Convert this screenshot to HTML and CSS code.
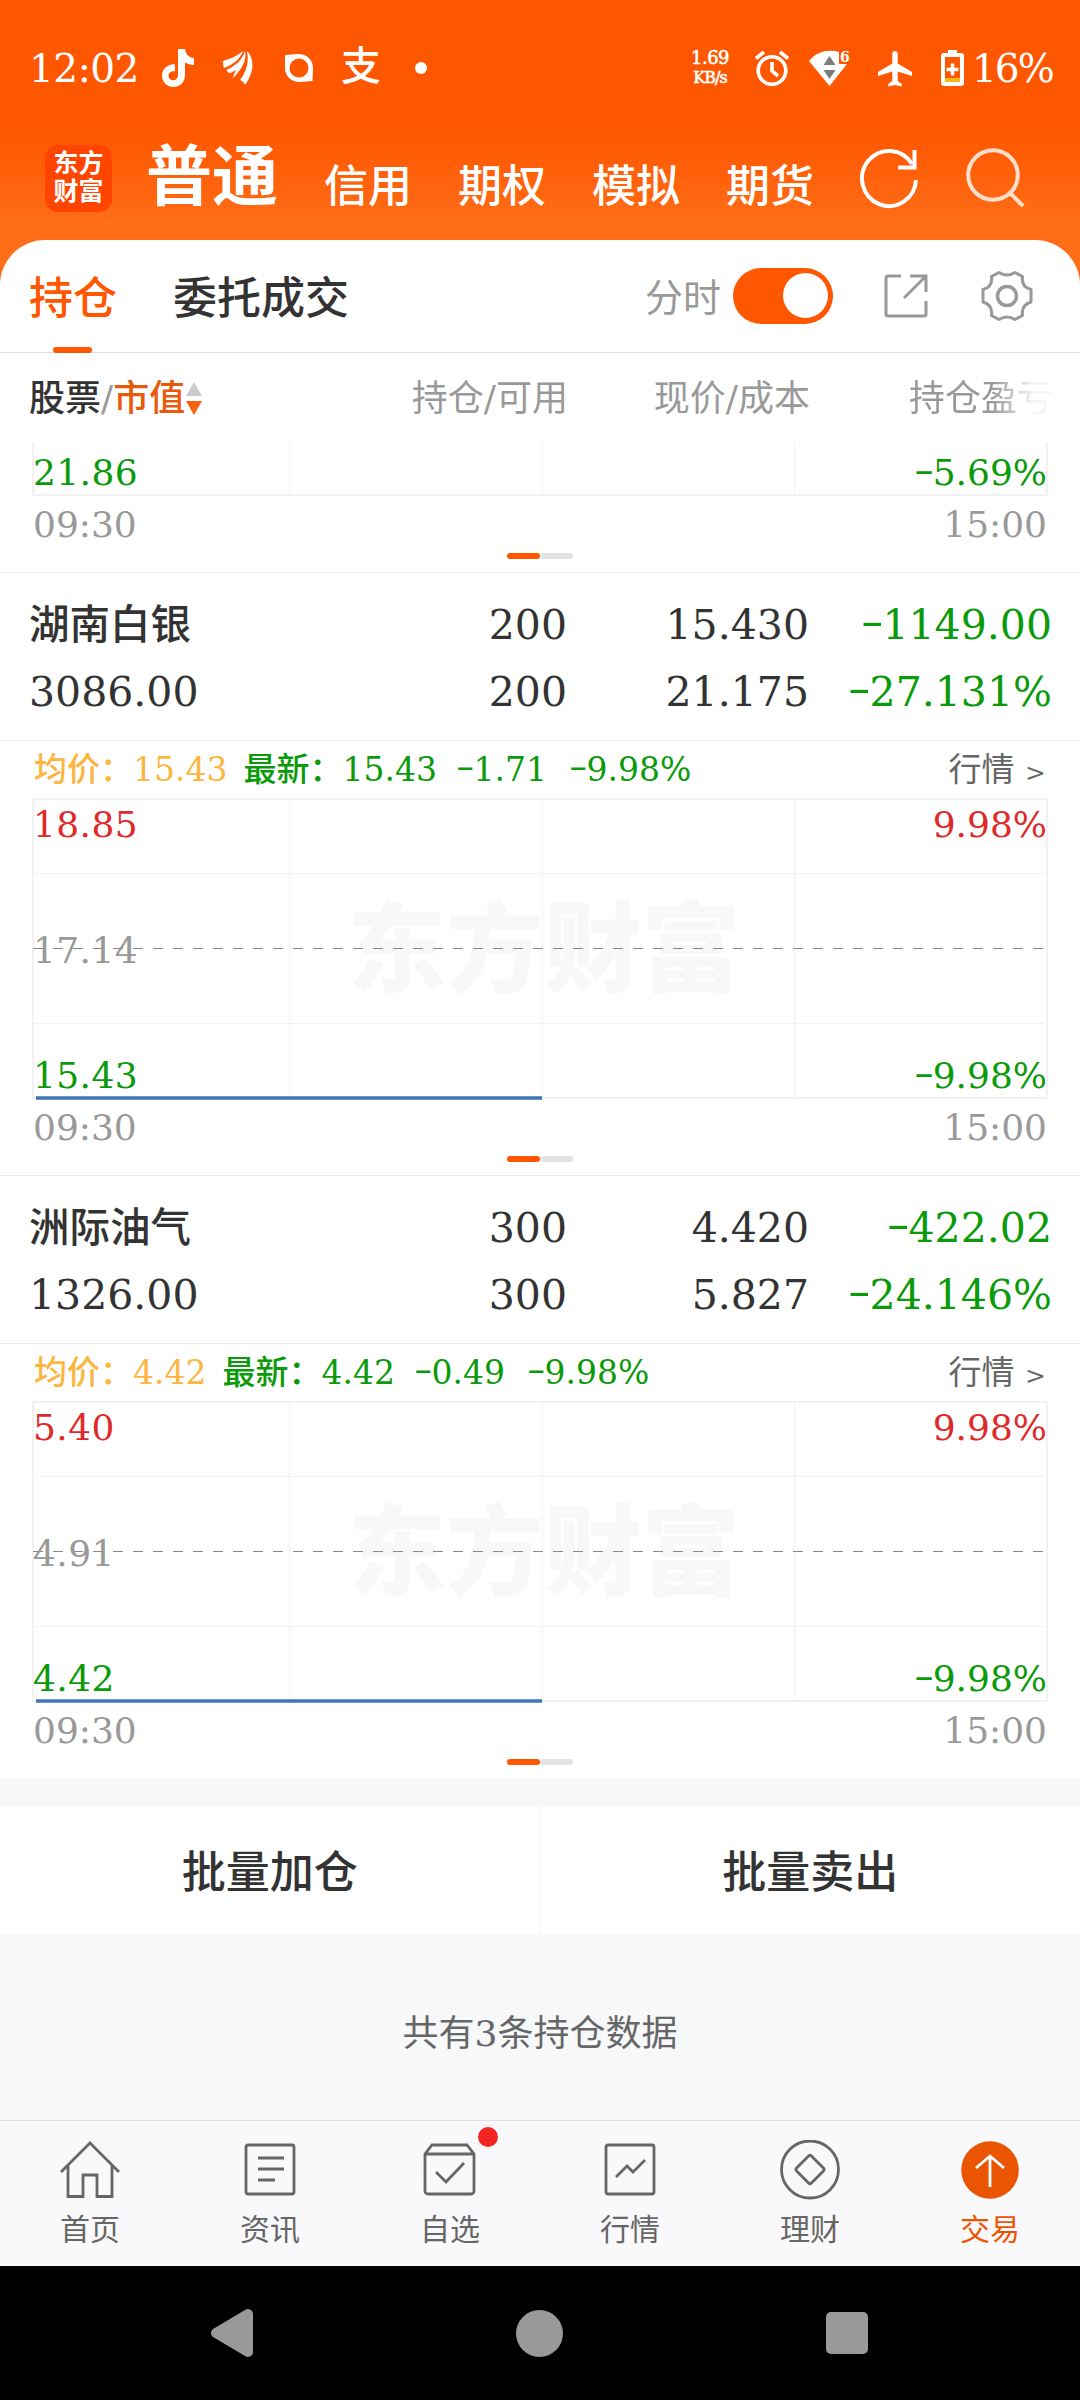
FILE: index.html
```html
<!DOCTYPE html>
<html lang="zh-CN">
<head>
    <meta charset="UTF-8">
    <title>持仓</title>
    <link rel="stylesheet" href="styles.css">
</head>
<body>
<!-- shared chart grid -->
<svg class="defs" width="0" height="0">
    <symbol id="chart-grid" viewBox="0 0 1016 301">
        <rect x="1" y="1" width="1014" height="299" fill="none" stroke="#f1f1f1" stroke-width="2"/>
        <path d="M257.5 2V299M510.5 2V299M762.5 2V299M2 75.5H1014M2 225.5H1014" stroke="#e6e6e6" stroke-width="1" stroke-dasharray="1 1"/>
    </symbol>
</svg>

<div class="header">
    <div class="status-bar">
        <span class="clock">12:02</span>
        <svg class="st-tiktok" width="34" height="40" viewBox="0 0 34 40"><path d="M17 1h7c.6 5 3.500 8.500 9 9v7c-3.500 0-6.500-1-9-2.800V27c0 7-5 12-11.500 12S1 34 1 27.500 6.500 16 14 16.300v7c-4-.5-6.500 1.500-6.500 4.500 0 2.500 2 4.500 4.500 4.500 3 0 5-2 5-5.500z" fill="#fff"/></svg>
        <svg class="st-kite" width="32" height="36" viewBox="0 0 32 36"><path d="M1 11C8 9 15 6 21 1c-2 7-9 13-19 17C1 16 .8 13 1 11zM4 20C14 16 20 10 23 1c2 9-3 18-12 27 0-3 2-5 3-8-3 2-5 3-7 3zM25 1c8 7 7 22-2 34-1-3-3-4-5-5 7-9 9-19 7-29z" fill="#fff"/></svg>
        <svg class="st-ring" width="30" height="30" viewBox="0 0 30 30"><path fill-rule="evenodd" d="M1 2l13-1c9 0 15 6 15 14l-.5 13-12.500 1C7 29 1 23 1 15zM15 5.500a9.500 9.500 0 1 0 0 19 9.500 9.500 0 0 0 0-19z" fill="#fff"/></svg>
        <span class="st-pay">支</span>
        <span class="st-dot"></span>
        <span class="speed"><b>1.69</b><b class="unit">KB/s</b></span>
        <svg class="st-alarm" width="36" height="36" viewBox="0 0 36 36" fill="none" stroke="#fff" stroke-width="3.600"><circle cx="18" cy="20.500" r="13.800"/><path d="M18 12v9l6 5M2 8.500l8-6.500M34 8.500L26 2"/></svg>
        <svg class="st-wifi" width="42" height="37" viewBox="0 0 42 37"><path d="M1 11C9 1 21-1 31 2v12h8L21.500 36z" fill="#fff"/><path d="M15.500 15L21.500 6l6 9zM15.500 20h12l-6 9z" fill="#7d7d7d"/><text x="32" y="12" font-size="14" font-weight="bold" fill="#fff">6</text></svg>
        <svg class="st-plane" width="36" height="37" viewBox="0 0 36 37"><path d="M18 1c1.800 0 2.700 1.300 2.700 3v9.500L35 22v4l-14.300-4.500V31l4 3v2.500L18 35l-6.700 1.500V34l4-3v-9.500L1 26v-4l14.300-8.500V4c0-1.700.9-3 2.700-3z" fill="#fff"/></svg>
        <svg class="st-battery" width="23" height="38" viewBox="0 0 23 38"><path d="M7 1h9v3h4a3 3 0 0 1 3 3v27a3 3 0 0 1-3 3H3a3 3 0 0 1-3-3V7a3 3 0 0 1 3-3h4z" fill="#fff"/><path d="M4 8h15v21H4z" fill="#ff5600"/><path d="M4 29h15v4H4z" fill="#f9b51b"/><path d="M11.500 14.500v12M5.500 20.500h12" stroke="#fff" stroke-width="3.500"/></svg>
        <span class="battery-text">16%</span>
    </div>
    <div class="nav">
        <div class="logo"><span>东方</span><span>财富</span></div>
        <span class="nav-item current">普通</span>
        <span class="nav-item">信用</span>
        <span class="nav-item">期权</span>
        <span class="nav-item">模拟</span>
        <span class="nav-item">期货</span>
        <svg class="refresh" width="60" height="62" viewBox="0 0 60 62" fill="none" stroke="#fff" stroke-width="4"><path d="M56 33A27 27.500 0 1 1 52 17"/><path d="M54.500 3v17.500H38"/></svg>
        <svg class="search" width="60" height="62" viewBox="0 0 60 62" fill="none" stroke="#ffdfcc" stroke-width="4"><circle cx="27" cy="28" r="24.800"/><path d="M44 46l13 13"/></svg>
    </div>
</div>

<div class="panel">
    <div class="tabs">
        <span class="tab active">持仓</span>
        <span class="tab">委托成交</span>
        <span class="switch-label">分时</span>
        <span class="switch"><i></i></span>
        <svg class="export" width="46" height="46" viewBox="0 0 46 46" fill="none" stroke="#999" stroke-width="3"><path d="M18 3H5a2 2 0 0 0-2 2v36a2 2 0 0 0 2 2h36a2 2 0 0 0 2-2V28"/><path d="M27 3h16v16M43 3L21 25"/></svg>
        <svg class="gear" width="52" height="52" viewBox="0 0 52 52" fill="none" stroke="#999" stroke-width="3"><path d="M18 2.500Q26 7.500 34 2.500L41.500 6.500Q40 17 50 19.500V32Q40 35 41.500 45.500L34 49.500Q26 44.500 18 49.500L10.500 45.500Q12 35 2 32V19.500Q12 17 10.500 6.500Z" stroke-linejoin="round"/><circle cx="26" cy="26" r="9.500" stroke-width="3.500"/></svg>
    </div>

    <div class="columns col-head">
        <span><em class="dark">股票</em>/<em class="orange">市值</em><svg width="16" height="34" viewBox="0 0 16 34"><path d="M0 14L8 0l8 14z" fill="#ccc"/><path d="M0 19h16L8 33z" fill="#f7630f"/></svg></span>
        <span>持仓/可用</span>
        <span>现价/成本</span>
        <span class="fade">持仓盈亏</span>
    </div>

    <!-- first holding, scrolled under the column header -->
    <div class="holding clipped">
        <div class="chart">
            <svg class="grid"><use href="#chart-grid"/></svg>
            <div class="scale"><span class="green">21.86</span></div>
            <div class="scale right"><span class="green"><i class="minus">-</i>5.69%</span></div>
        </div>
        <div class="axis"><span>09:30</span><span>15:00</span></div>
        <div class="pager"><i class="on"></i><i></i></div>
    </div>

    <div class="holding">
        <div class="columns row">
            <span class="name">湖南白银</span><span>200</span><span>15.430</span><span class="green"><i class="minus">-</i>1149.00</span>
            <span>3086.00</span><span>200</span><span>21.175</span><span class="green"><i class="minus">-</i>27.131%</span>
        </div>
        <div class="quote">
            <span class="avg">均价：15.43</span>
            <span class="green">最新：15.43</span>
            <span class="green diff"><i class="minus">-</i>1.71</span>
            <span class="green diff"><i class="minus">-</i>9.98%</span>
            <span class="more">行情 <i>&gt;</i></span>
        </div>
        <div class="chart">
            <div class="watermark">东方财富</div>
            <svg class="grid"><use href="#chart-grid"/><path d="M1 150.500H1014" stroke="#888" stroke-dasharray="10 10"/><path d="M4 300H510" stroke="#3f76b8" stroke-width="3.500"/></svg>
            <div class="scale"><span class="red">18.85</span><span>17.14</span><span class="green">15.43</span></div>
            <div class="scale right"><span class="red">9.98%</span><span class="green"><i class="minus">-</i>9.98%</span></div>
        </div>
        <div class="axis"><span>09:30</span><span>15:00</span></div>
        <div class="pager"><i class="on"></i><i></i></div>
    </div>

    <div class="holding">
        <div class="columns row">
            <span class="name">洲际油气</span><span>300</span><span>4.420</span><span class="green"><i class="minus">-</i>422.02</span>
            <span>1326.00</span><span>300</span><span>5.827</span><span class="green"><i class="minus">-</i>24.146%</span>
        </div>
        <div class="quote">
            <span class="avg">均价：4.42</span>
            <span class="green">最新：4.42</span>
            <span class="green diff"><i class="minus">-</i>0.49</span>
            <span class="green diff"><i class="minus">-</i>9.98%</span>
            <span class="more">行情 <i>&gt;</i></span>
        </div>
        <div class="chart">
            <div class="watermark">东方财富</div>
            <svg class="grid"><use href="#chart-grid"/><path d="M1 150.500H1014" stroke="#888" stroke-dasharray="10 10"/><path d="M4 300H510" stroke="#3f76b8" stroke-width="3.500"/></svg>
            <div class="scale"><span class="red">5.40</span><span>4.91</span><span class="green">4.42</span></div>
            <div class="scale right"><span class="red">9.98%</span><span class="green"><i class="minus">-</i>9.98%</span></div>
        </div>
        <div class="axis"><span>09:30</span><span>15:00</span></div>
        <div class="pager"><i class="on"></i><i></i></div>
    </div>
</div>

<div class="batch">
    <span>批量加仓</span>
    <span>批量卖出</span>
</div>
<div class="summary">共有3条持仓数据</div>

<div class="tabbar">
    <div class="tabbar-item">
        <svg width="62" height="62" viewBox="0 0 62 62"><path d="M2 32L31 3l29 29M9 26v30.500h15V35h14v21.500h15V26"/></svg>
        <span>首页</span>
    </div>
    <div class="tabbar-item">
        <svg width="62" height="62" viewBox="0 0 62 62"><rect x="7" y="5" width="48" height="49" rx="2"/><path d="M19 18h26M19 29h26M19 40h17"/></svg>
        <span>资讯</span>
    </div>
    <div class="tabbar-item">
        <svg width="62" height="62" viewBox="0 0 62 62"><path d="M6 14l7-9h35l7 9v37a3 3 0 0 1-3 3H9a3 3 0 0 1-3-3zM6 14h49M17 32l10 10 18-19"/></svg>
        <i class="badge"></i>
        <span>自选</span>
    </div>
    <div class="tabbar-item">
        <svg width="62" height="62" viewBox="0 0 62 62"><rect x="7" y="5" width="48" height="49" rx="2"/><path d="M17 37l11-11 6 6 12-12"/></svg>
        <span>行情</span>
    </div>
    <div class="tabbar-item">
        <svg width="62" height="62" viewBox="0 0 62 62"><circle cx="31" cy="29.500" r="28.500"/><rect x="20.500" y="19" width="21" height="21" rx="2" transform="rotate(45 31 29.500)"/></svg>
        <span>理财</span>
    </div>
    <div class="tabbar-item active">
        <svg width="62" height="62" viewBox="0 0 62 62"><circle cx="31" cy="30" r="28.800" fill="#ea5504" stroke="none"/><path d="M31 47V16M17 28l14-12 14 12" stroke="#fff"/></svg>
        <span>交易</span>
    </div>
</div>

<div class="system-nav">
    <svg width="44" height="50" viewBox="0 0 44 50"><path d="M38 6v38L6 25z" fill="#999" stroke="#999" stroke-width="10" stroke-linejoin="round"/></svg>
    <i class="home"></i>
    <i class="recent"></i>
</div>
</body>
</html>
```

FILE: styles.css
```css
* {
    box-sizing: border-box;
}
body {
    margin: 0;
    width: 1080px;
    height: 2400px;
    overflow: hidden;
    background-color: #f7f8fa;
    color: #333;
    font-family: "DejaVu Serif", "Noto Sans CJK SC", serif;
}
em, i {
    font-style: normal;
}
svg {
    flex: none;
    display: block;
}
.defs {
    position: absolute;
}
.green { color: #0a9a0a; }
.red { color: #e02a2a; }
.dark { color: #333; font-weight: 500; }
.orange { color: #e8590c; font-weight: 500; }
/* wide minus, centred on the digits */
.minus {
    display: inline-block;
    width: 0.5em;
    text-align: center;
    transform: translateY(-0.09em) scaleX(1.7);
}

/* header */
.header {
    height: 290px;
    background: linear-gradient(#ff5600 130px, #ff6d17 225px);
    color: #fff;
}
.status-bar {
    display: flex;
    align-items: center;
    height: 136px;
    padding-left: 29px;
}
.clock {
    width: 132px;
    font-size: 39px;
    letter-spacing: -0.5px;
}
.st-kite { margin-left: 27px; }
.st-ring { margin-left: 30px; }
.st-pay {
    width: 40px;
    margin-left: 27px;
    font-size: 40px;
    line-height: 40px;
    font-weight: 500;
    transform: translateY(-2px);
}
.st-dot {
    width: 12px;
    height: 12px;
    margin-left: 34px;
    border-radius: 50%;
    background-color: #fff;
}
.speed {
    width: 46px;
    margin-left: 260px;
    font-size: 18px;
    line-height: 20px;
    text-align: center;
    letter-spacing: -0.5px;
}
.speed b {
    display: block;
    font-weight: normal;
    -webkit-text-stroke: 0.6px #fff;
}
.speed .unit {
    font-size: 16px;
    letter-spacing: -1px;
}
.st-alarm { margin-left: 21px; }
.st-wifi { margin-left: 18px; }
.st-plane { margin-left: 27px; }
.st-battery { margin-left: 28px; }
.battery-text {
    margin-left: 8px;
    font-size: 39px;
    letter-spacing: -2px;
}
.nav {
    display: flex;
    align-items: center;
    height: 84px;
    padding-left: 45px;
}
.logo {
    width: 67px;
    height: 67px;
    padding-top: 5px;
    margin-right: 34px;
    border-radius: 13px;
    background-color: #ff4500;
    font-size: 25px;
    line-height: 28px;
    font-weight: 700;
    text-align: center;
}
.logo span {
    display: block;
}
.nav-item {
    margin-top: 17px;
    margin-right: 46px;
    font-size: 44px;
    line-height: 50px;
    font-weight: 500;
}
.nav-item.current {
    margin-top: -3px;
    margin-right: 46px;
    font-size: 66px;
    line-height: 80px;
    font-weight: 700;
}
.search {
    margin-left: 46px;
}

/* holdings panel */
.panel {
    margin-top: -50px;
    border-radius: 45px 45px 0 0;
    background-color: #fff;
}
.tabs {
    display: flex;
    align-items: center;
    height: 113px;
    padding-left: 29px;
    border-bottom: 1px solid #ddd;
}
.tab {
    position: relative;
    margin-top: -3px;
    margin-right: 56px;
    font-size: 44px;
    font-weight: 500;
}
.tab.active {
    color: #ff5600;
}
.tab.active::after {
    content: "";
    position: absolute;
    left: 24px;
    bottom: -26px;
    width: 39px;
    height: 6px;
    border-radius: 3px;
    background-color: #ff5600;
}
.switch-label {
    margin-top: -4px;
    margin-left: 240px;
    font-size: 38px;
    color: #999;
}
.switch {
    width: 100px;
    height: 56px;
    margin-left: 12px;
    padding: 5px;
    border-radius: 28px;
    background-color: #ff5600;
}
.switch i {
    display: block;
    width: 45px;
    height: 45px;
    margin-left: 45px;
    border-radius: 50%;
    background-color: #fff;
}
.export { margin-left: 50px; }
.gear { margin-left: 52px; }

.columns {
    display: grid;
    grid-template-columns: 1fr 180px 242px 243px;
    align-content: start;
    padding: 0 28px 0 29px;
    text-align: right;
    white-space: nowrap;
}
.columns > :nth-child(4n + 1) {
    text-align: left;
}
.col-head {
    height: 89px;
    padding-right: 27px;
    line-height: 91px;
    font-size: 36px;
    color: #999;
}
.col-head span:first-child {
    display: flex;
    align-items: center;
}
.col-head svg {
    margin-left: 1px;
}
.fade {
    -webkit-mask-image: linear-gradient(to right, #000 75%, rgba(0, 0, 0, 0.1) 92%);
    mask-image: linear-gradient(to right, #000 75%, rgba(0, 0, 0, 0.1) 92%);
}
.holding {
    border-top: 1px solid #ebebeb;
}
.clipped {
    display: flex;
    flex-direction: column;
    justify-content: flex-end;
    height: 130px;
    border-top: none;
    overflow: hidden;
}
.row {
    height: 168px;
    padding-top: 19px;
    border-bottom: 1px solid #ebebeb;
    font-size: 41px;
    line-height: 67px;
}
.row .name {
    font-size: 40.5px;
    font-weight: 500;
}
.quote {
    display: flex;
    height: 57px;
    padding: 0 34px;
    font-size: 33px;
    line-height: 57px;
    white-space: nowrap;
    font-weight: 500;
}
.avg {
    margin-right: 16px;
    color: #fbb63f;
}
.diff {
    margin-left: 20px;
}
.diff + .diff {
    margin-left: 23px;
}
.more {
    margin-left: auto;
    color: #666;
    font-weight: 400;
}
.more i {
    font-size: 25px;
}
.chart {
    position: relative;
    flex: none;
    display: flex;
    justify-content: space-between;
    width: 1016px;
    height: 301px;
    margin-left: 32px;
    font-size: 36px;
    line-height: 40px;
    color: #999;
}
.grid {
    position: absolute;
    left: 0;
    top: 0;
    width: 1016px;
    height: 301px;
    overflow: visible;
}
.watermark {
    position: absolute;
    left: 316px;
    top: 97px;
    width: 400px;
    font-size: 98px;
    line-height: 110px;
    font-weight: 900;
    white-space: nowrap;
    color: #f8f8f8;
}
.scale {
    position: relative;
    display: flex;
    flex-direction: column;
    justify-content: space-between;
    padding: 7px 0 3px 1px;
    letter-spacing: 0.4px;
}
.scale.right {
    padding: 7px 1px 3px 0;
    text-align: right;
    letter-spacing: 0;
}
.clipped .scale {
    justify-content: flex-end;
}
.axis {
    display: flex;
    flex: none;
    justify-content: space-between;
    height: 57px;
    padding: 0 33px;
    font-size: 36px;
    line-height: 58px;
    color: #999;
}
.pager {
    display: flex;
    flex: none;
    justify-content: center;
    height: 19px;
}
.pager i {
    width: 33px;
    height: 6px;
    border-radius: 3px;
    background-color: #e3e3e3;
}
.pager .on {
    background-color: #ff5600;
}

/* bottom actions */
.batch {
    display: flex;
    height: 128px;
    margin-top: 29px;
    background-color: #fff;
    font-size: 44px;
    line-height: 131px;
    font-weight: 500;
    text-align: center;
}
.batch span {
    flex: 1;
}
.batch span:first-child {
    border-right: 1px solid #f3f3f3;
}
.summary {
    height: 185px;
    padding-top: 72px;
    font-size: 36px;
    line-height: 54px;
    text-align: center;
    color: #666;
}
.tabbar {
    display: flex;
    height: 146px;
    border-top: 1px solid #dfe1e4;
    background-color: #f9f9fb;
}
.tabbar-item {
    position: relative;
    flex: 1;
    display: flex;
    flex-direction: column;
    align-items: center;
    padding-top: 19px;
    font-size: 30px;
    line-height: 36px;
    color: #666;
}
.tabbar-item svg {
    margin-bottom: 10px;
    fill: none;
    stroke: #666;
    stroke-width: 2.8;
}
.tabbar-item.active {
    color: #ea5504;
}
.badge {
    position: absolute;
    left: 118px;
    top: 6px;
    width: 20px;
    height: 20px;
    border-radius: 50%;
    background-color: #f32424;
}
.system-nav {
    display: flex;
    align-items: center;
    height: 134px;
    padding-left: 210px;
    background-color: #000;
}
.home {
    width: 47px;
    height: 47px;
    margin-left: 262px;
    border-radius: 50%;
    background-color: #999;
}
.recent {
    width: 42px;
    height: 42px;
    margin-left: 263px;
    border-radius: 5px;
    background-color: #999;
}
```
